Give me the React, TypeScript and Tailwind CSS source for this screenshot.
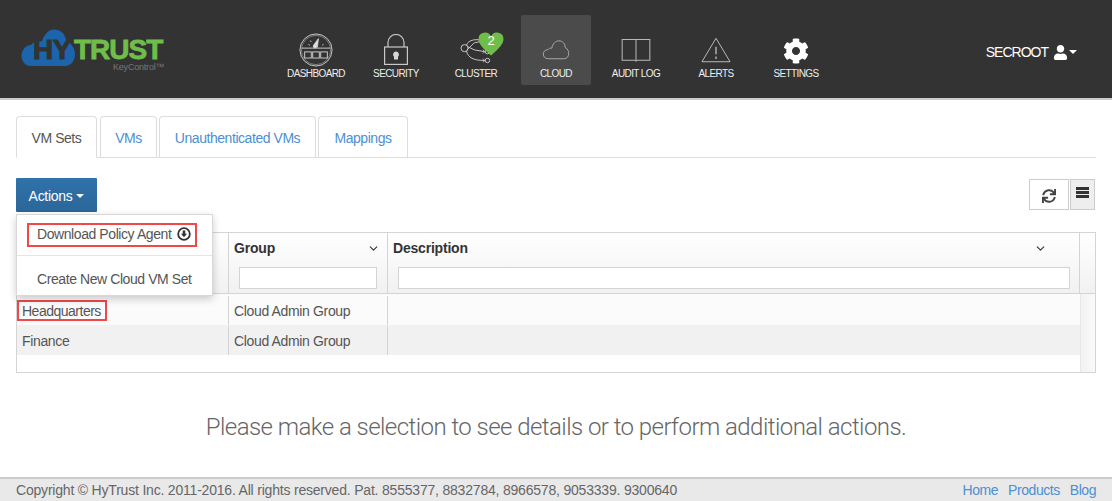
import React from 'react';
import { ChevronDown } from 'lucide-react';
import { FaCog, FaSync, FaUser } from 'react-icons/fa';

const DashboardIcon = () => (
  <svg width="34" height="34" viewBox="0 0 36 36" fill="none" stroke="#d0d0d0" strokeWidth="1">
    <circle cx="18" cy="18" r="17" />
    <circle cx="18" cy="18" r="15.500" strokeWidth="0.5" />
    <path d="M3 16h30" />
    <rect x="6" y="20" width="7" height="6.500" />
    <rect x="14.500" y="20" width="7" height="6.500" />
    <rect x="23" y="20" width="7" height="6.500" />
    <path d="M15.500 13 L20.500 6 L19.500 15 Z" fill="#e6e6e6" />
    <circle cx="17" cy="14" r="1.800" fill="#e6e6e6" />
    <path d="M10 12l1.500 1M12 8l1 1.500M26 12l-1.500 1" />
  </svg>
);

const LockIcon = () => (
  <svg width="24" height="31" viewBox="0 0 24 31" fill="none" stroke="#c8c8c8" strokeWidth="1.200">
    <path d="M4 13V8.500a8 8 0 0 1 16 0V13" />
    <rect x="0.600" y="13" width="22.800" height="17.400" />
    <path d="M12 17.500a3 3 0 0 1 2 5.200V25.500h-4v-2.800a3 3 0 0 1 2-5.200z" fill="#d8d8d8" stroke="none" />
  </svg>
);

const ClusterIcon = () => (
  <svg width="32" height="30" viewBox="0 0 36 34" fill="none" stroke="#c8c8c8" strokeWidth="1.100">
    <circle cx="5" cy="16" r="4" />
    <circle cx="31" cy="20" r="2.500" />
    <circle cx="31" cy="30" r="2.500" />
    <path d="M7 13C9 6 20 5 26 8M8 14l8 4 12 2M8 18l8-8 10-2M7 19c2 8 8 11 21 11" />
    <path d="M26 18l2 2-2 2M26 28l2 2-2 2" />
  </svg>
);

const HeartBadge = () => (
  <div className="absolute left-[37px] top-[17px] w-[26px] h-[24px]">
    <svg width="26" height="24" viewBox="0 0 26 24" className="absolute inset-0">
      <path d="M13 23.500C5 16.500 0.500 12 0.500 7A6.500 6.500 0 0 1 13 4.500A6.500 6.500 0 0 1 25.500 7C25.500 12 21 16.500 13 23.500Z" fill="#6fbe4a" />
    </svg>
    <span className="absolute inset-x-0 top-[1px] text-center text-[13px] leading-[16px] text-white">2</span>
  </div>
);

const CloudIcon = () => (
  <svg width="30" height="20" viewBox="0 0 32 24" fill="none" stroke="#a8a8a8" strokeWidth="1.200">
    <path d="M7 22.500C3 22.500 0.700 20 0.700 17C0.700 14 3 11.500 6.500 11.500C7.500 10 9 9.500 11 9.800C12 4 16 1 19.500 1C24 1 27 4.500 27 9C30 10.500 31.300 13.500 31.300 16C31.300 20 29 22.500 25.500 22.500Z" />
  </svg>
);

const BookIcon = () => (
  <svg width="30" height="24" viewBox="0 0 32 26" fill="none" stroke="#b8b8b8" strokeWidth="1.100">
    <path d="M1 1.500h30v22.500H17.500l-1.500 1-1.500-1H1zM16 1.500V24" />
  </svg>
);

const AlertIcon = () => (
  <svg width="30" height="26" viewBox="0 0 32 27" fill="none" stroke="#c0c0c0" strokeWidth="1">
    <path d="M16 1 L31 26 H1 Z" />
    <path d="M16 10v8M16 20.500v2.500" strokeWidth="1.400" />
  </svg>
);

const DownloadIcon = () => (
  <svg width="14" height="14" viewBox="0 0 14 14" fill="none">
    <circle cx="7" cy="7" r="5.800" stroke="#333" strokeWidth="1.800" />
    <path d="M5.700 3.500h2.600v3.200h1.800L7 10.300 3.900 6.700h1.800z" fill="#333" />
  </svg>
);

const navItems = [
  { label: 'DASHBOARD', icon: <DashboardIcon />, pad: 'pb-0' },
  { label: 'SECURITY', icon: <LockIcon />, pad: 'pb-[2px]' },
  { label: 'CLUSTER', icon: <ClusterIcon />, pad: 'pb-[3px]', badge: true },
  { label: 'CLOUD', icon: <CloudIcon />, pad: 'pb-[7px]', active: true },
  { label: 'AUDIT LOG', icon: <BookIcon />, pad: 'pb-[5px]' },
  { label: 'ALERTS', icon: <AlertIcon />, pad: 'pb-[4px]' },
  { label: 'SETTINGS', icon: <FaCog className="text-white" size={26} />, pad: 'pb-[3px]' },
];

const tabs = [
  { label: 'VM Sets', width: 'w-[81px] mr-[1px]', active: true },
  { label: 'VMs', width: 'w-[57px]' },
  { label: 'Unauthenticated VMs', width: 'w-[157px]' },
  { label: 'Mappings', width: 'w-[90px]' },
];

const Logo = () => (
  <div className="relative w-[150px] h-[45px]">
    <svg width="54" height="37" viewBox="0 0 54 37" className="absolute left-0 top-0">
      <path d="M10 37C4 37 0.500 32 0.500 26.500C0.500 21 5 16 10 16C12 13 16 11.500 21 12.500C23 5 28 0.500 33 0.500C39 0.500 44 4 45 11C50 14 54 19 54 25C54 32 50 37 44 37Z" fill="#1c64ac" />
    </svg>
    <span className="absolute left-[12px] top-[12px] text-[28px] leading-[18px] font-bold text-[#333] tracking-[-0.5px] [-webkit-text-stroke:1px_#333]">HY</span>
    <span className="absolute left-[53px] top-[12px] text-[28px] leading-[18px] font-bold text-[#6fbe4a] tracking-[-1px] [-webkit-text-stroke:0.8px_#6fbe4a]">TRUST</span>
    <span className="absolute left-[92px] top-[32px] text-[9px] leading-[12px] tracking-[-0.2px] text-[#777]">KeyControl™</span>
  </div>
);

export default function App() {
  return (
    <div className="w-[1112px] h-[501px] overflow-hidden flex flex-col bg-white font-['Liberation_Sans',sans-serif] text-[#555]">
      <header className="h-[100px] shrink-0 bg-[#333333] border-b-2 border-[#cccccc] flex items-start">
        <div className="w-[281px] pl-[21px] pt-[29px] shrink-0">
          <Logo />
        </div>
        <nav className="flex gap-[10px] pt-[15px]">
          {navItems.map((item) => (
            <div
              key={item.label}
              className={`relative w-[70px] h-[70px] rounded-[2px] flex flex-col items-center ${item.active ? 'bg-[#4b4b4b]' : ''}`}
            >
              <div className={`h-[52px] flex items-end justify-center ${item.pad}`}>{item.icon}</div>
              <span className="mt-[1px] text-[10px] leading-[12px] tracking-[-0.6px] text-[#eeeeee] whitespace-nowrap">{item.label}</span>
              {item.badge && <HeartBadge />}
            </div>
          ))}
        </nav>
        <div className="ml-auto mr-[35px] mt-[43px] flex items-center text-white text-[14px] leading-[18px] tracking-[-1px]">
          <span>SECROOT</span>
          <FaUser className="ml-[5px]" size={15} />
          <span className="ml-[1px] border-x-[4px] border-t-[4px] border-x-transparent border-t-white" />
        </div>
      </header>

      <main className="relative flex-1 px-4 pt-4">
        <div className="flex h-[42px] gap-[2px] border-b border-[#dddddd]">
          {tabs.map((tab) => (
            <div
              key={tab.label}
              className={`${tab.width} h-[42px] pt-[2px] rounded-t-[4px] border border-[#dddddd] flex items-center justify-center text-[14px] tracking-[-0.45px] ${
                tab.active ? 'border-b-white bg-white text-[#555]' : 'border-b-transparent text-[#4d8fd1]'
              }`}
            >
              {tab.label}
            </div>
          ))}
        </div>

        <div className="mt-[20px] flex items-start justify-between pr-[1px]">
          <button className="w-[81px] h-[34px] pt-[2px] bg-gradient-to-b from-[#3072ab] to-[#2a6699] text-white text-[14px] tracking-[-0.3px] flex items-center justify-center gap-[4px] rounded-[1px]">
            Actions
            <span className="border-x-[4px] border-t-[4px] border-x-transparent border-t-white" />
          </button>
          <div className="flex gap-[1px] mt-[1px]">
            <div className="w-[40px] h-[31px] pt-[2px] border border-[#cccccc] bg-white flex items-center justify-center">
              <FaSync size={14} className="text-[#444]" />
            </div>
            <div className="w-[25px] h-[31px] border border-[#cccccc] bg-[#eeeeee] flex flex-col items-center gap-[1px] pt-[7px]">
              <div className="w-[13px] h-[3px] bg-[#333]" />
              <div className="w-[13px] h-[3px] bg-[#333]" />
              <div className="w-[13px] h-[3px] bg-[#333]" />
            </div>
          </div>
        </div>

        <div className="mt-[20px] h-[141px] border border-[#d4d4d4] flex flex-col">
          <div className="h-[61px] shrink-0 flex border-b border-[#d4d4d4] bg-gradient-to-b from-white to-[#f1f1f1] text-[#333]">
            <div className="w-[212px] border-r border-[#d4d4d4]" />
            <div className="w-[159px] border-r border-[#d4d4d4] px-[5px] pt-[6px]">
              <div className="flex justify-between items-center h-[18px] pr-[2px] text-[14px] font-bold tracking-[-0.2px]">
                Group
                <ChevronDown size={13} strokeWidth={2} />
              </div>
              <div className="mt-[10px] ml-[5px] h-[22px] w-[138px] border border-[#d4d4d4] bg-white" />
            </div>
            <div className="w-[692px] border-r border-[#d4d4d4] px-[5px] pt-[6px]">
              <div className="flex justify-between items-center h-[18px] pr-[27px] text-[14px] font-bold tracking-[-0.2px]">
                Description
                <ChevronDown size={13} strokeWidth={2} />
              </div>
              <div className="mt-[10px] ml-[5px] h-[22px] w-[672px] border border-[#d4d4d4] bg-white" />
            </div>
            <div className="flex-1" />
          </div>
          <div className="flex-1 flex">
            <div className="w-[1063px] text-[14px] tracking-[-0.35px] text-[#555]">
              <div className="h-[31px] flex bg-[#fbfbfb] pt-[2px]">
                <div className="w-[212px] border-r border-[#d4d4d4] flex items-center">
                  <span className="border-2 border-[#f04848] h-[21px] w-[90px] pl-[3px] leading-[18px] tracking-[-0.5px]">Headquarters</span>
                </div>
                <div className="w-[159px] border-r border-[#d4d4d4] pl-[5px] pt-[2px] flex items-center">Cloud Admin Group</div>
              </div>
              <div className="h-[30px] flex bg-[#f1f1f1] pt-[1px]">
                <div className="w-[212px] border-r border-[#d4d4d4] pl-[5px] pt-[2px] flex items-center">Finance</div>
                <div className="w-[159px] border-r border-[#d4d4d4] pl-[5px] pt-[2px] flex items-center">Cloud Admin Group</div>
              </div>
            </div>
            <div className="flex-1 border-l border-[#e8e8e8] bg-gradient-to-r from-[#f2f2f2] to-[#fafafa]" />
          </div>
        </div>

        <div className="absolute left-4 top-[114px] w-[197px] h-[82px] bg-white border border-[#d8d8d8] shadow-[0_3px_8px_rgba(0,0,0,0.2)] text-[#555] text-[14px] tracking-[-0.42px]">
          <div className="h-[41px] pt-[8px] pl-[10px] border-b border-[#e5e5e5]">
            <div className="w-[170px] h-[24px] pb-[2px] border-2 border-[#f04848] pl-[8px] flex items-center gap-[6px]">
              Download Policy Agent
              <DownloadIcon />
            </div>
          </div>
          <div className="pl-[20px] pt-[14px] leading-[18px]">Create New Cloud VM Set</div>
        </div>

        <p className="mt-[41px] text-center font-['Roboto',sans-serif] text-[24px] leading-[26px] tracking-[-0.55px] text-[#666] font-light">
          Please make a selection to see details or to perform additional actions.
        </p>
      </main>

      <footer className="h-[24px] shrink-0 bg-[#e9e9e9] border-t-2 border-[#cccccc] px-4 flex items-center justify-between text-[14px] tracking-[-0.2px] text-[#666]">
        <span>Copyright © HyTrust Inc. 2011-2016. All rights reserved. Pat. 8555377, 8832784, 8966578, 9053339. 9300640</span>
        <div className="flex gap-[10px] text-[#4d8fd1] tracking-[-0.45px]">
          <span>Home</span>
          <span>Products</span>
          <span>Blog</span>
        </div>
      </footer>
    </div>
  );
}
